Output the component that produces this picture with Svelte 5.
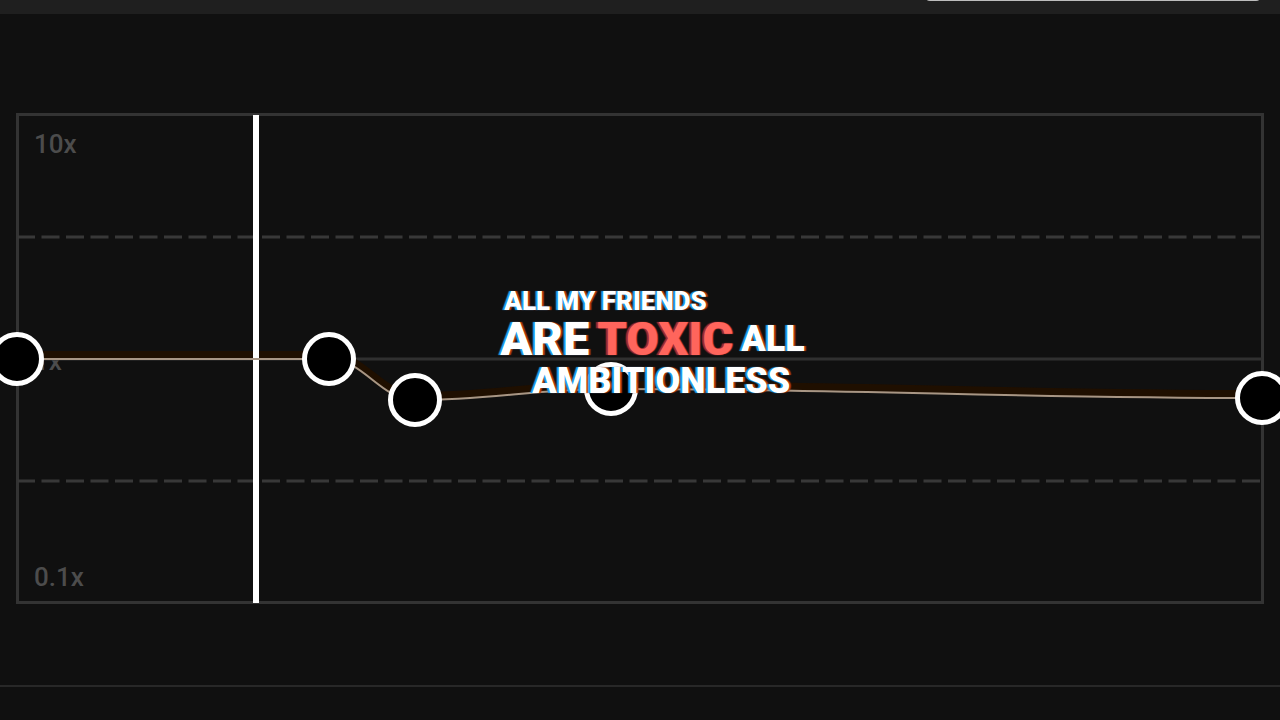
<script>
    const width = 1248;
    const height = 491;

    let playhead = 240;

    let points = [
        { x: 1, y: 246 },
        { x: 313, y: 246 },
        { x: 399, y: 287 },
        { x: 595, y: 276 },
        { x: 1246, y: 285 }
    ];

    const guides = [
        { y: 124, dashed: true },
        { y: 246, dashed: false },
        { y: 368, dashed: true }
    ];

    // smooth curve with horizontal tangents at every keyframe
    function curvePath(list, dy = 0) {
        let d = `M${list[0].x} ${list[0].y + dy}`;
        for (let i = 1; i < list.length; i++) {
            const a = list[i - 1];
            const b = list[i];
            const mid = (b.x - a.x) * 0.4;
            d += ` C${a.x + mid} ${a.y + dy} ${b.x - mid} ${b.y + dy} ${b.x} ${b.y + dy}`;
        }
        return d;
    }

    const percentX = (x) => (x / width) * 100 + "%";
    const percentY = (y) => (y / height) * 100 + "%";
</script>

<div class="editor">
    <header class="topbar">
        <button class="preview" aria-label="Preview"></button>
    </header>

    <main class="speed">
        <div class="chart">
            <svg class="plot" viewBox="0 0 {width} {height}" preserveAspectRatio="none" aria-hidden="true">
                <rect class="frame" x="1.5" y="1.5" width={width - 3} height={height - 3} />
                {#each guides as guide}
                    <line class="guide" class:dashed={guide.dashed} x1="2" x2={width - 2} y1={guide.y} y2={guide.y} />
                {/each}
            </svg>

            <div class="labels">
                <span>10x</span>
                <span>1x</span>
                <span>0.1x</span>
            </div>

            <svg class="plot" viewBox="0 0 {width} {height}" preserveAspectRatio="none" aria-hidden="true">
                <path class="glow" d={curvePath(points, -4)} />
                <line class="playhead" x1={playhead} x2={playhead} y1="2" y2={height - 1} />
                <path class="curve" d={curvePath(points)} />
            </svg>

            {#each points as point, i}
                <button
                    class="point"
                    aria-label="Keyframe {i + 1}"
                    style="left: {percentX(point.x)}; top: {percentY(point.y)}"
                ></button>
            {/each}

            <div class="caption">
                <div class="line small">ALL MY FRIENDS</div>
                <div class="line big">
                    <span>ARE</span>
                    <span class="accent">TOXIC</span>
                    <span class="medium">ALL</span>
                </div>
                <div class="line medium last">AMBITIONLESS</div>
            </div>
        </div>
    </main>

    <footer class="bottom"></footer>
</div>

<style>
    :global(body) {
        background: #101010;
    }
    .editor {
        font-family: Roboto, "Liberation Sans", sans-serif;
        min-height: 100vh;
        overflow: hidden;
        background: #101010;
        color: #fff;
    }
    .topbar {
        display: flex;
        justify-content: flex-end;
        align-items: flex-end;
        box-sizing: border-box;
        height: 14px;
        padding: 0 18px 13px;
        background: #1f1f1f;
    }
    .preview {
        flex: none;
        width: 338px;
        height: 48px;
        border: 0;
        border-radius: 6px;
        background: #bdbdbd;
    }
    .speed {
        padding: 99px 16px 81px;
    }
    .chart {
        position: relative;
        height: 491px;
    }
    .plot {
        position: absolute;
        inset: 0;
        width: 100%;
        height: 100%;
        overflow: visible;
        fill: none;
    }
    .frame {
        stroke: #333;
        stroke-width: 3;
    }
    .guide {
        stroke: #303030;
        stroke-width: 3;
    }
    .dashed {
        stroke: #383838;
        stroke-dasharray: 18 6.5;
        stroke-dashoffset: 1;
    }
    .glow {
        stroke: #1f0f00;
        stroke-width: 8;
    }
    .curve {
        stroke: #a89684;
        stroke-width: 2;
    }
    .playhead {
        stroke: #fff;
        stroke-width: 6;
    }
    .labels {
        display: flex;
        flex-direction: column;
        justify-content: space-between;
        box-sizing: border-box;
        height: 100%;
        padding: 16px 18px 12px;
        color: #4c4c4c;
        font-size: 26px;
        font-weight: 500;
        line-height: 30px;
    }
    .point {
        position: absolute;
        box-sizing: border-box;
        width: 54px;
        height: 54px;
        padding: 0;
        border: 5px solid #fff;
        border-radius: 50%;
        background: #000;
        transform: translate(-50%, -50%);
    }
    .caption {
        position: absolute;
        top: 35%;
        left: 38.8%;
        font-weight: 900;
        white-space: nowrap;
        text-shadow: -2px 0 1px #1a9cff, 2px 0 1px #b8380c;
    }
    .line {
        line-height: 40px;
    }
    .small {
        padding-left: 4px;
        font-size: 26px;
        line-height: 32px;
    }
    .big {
        display: flex;
        align-items: center;
        gap: 8px;
        font-size: 47px;
        line-height: 44px;
    }
    .medium {
        font-size: 36px;
    }
    .last {
        padding-left: 32px;
    }
    .accent {
        color: #ff655c;
        text-shadow: -2px 0 1px #a02c38, 1px 0 1px #c43a30;
    }
    .bottom {
        border-top: 2px solid #282828;
    }
</style>
